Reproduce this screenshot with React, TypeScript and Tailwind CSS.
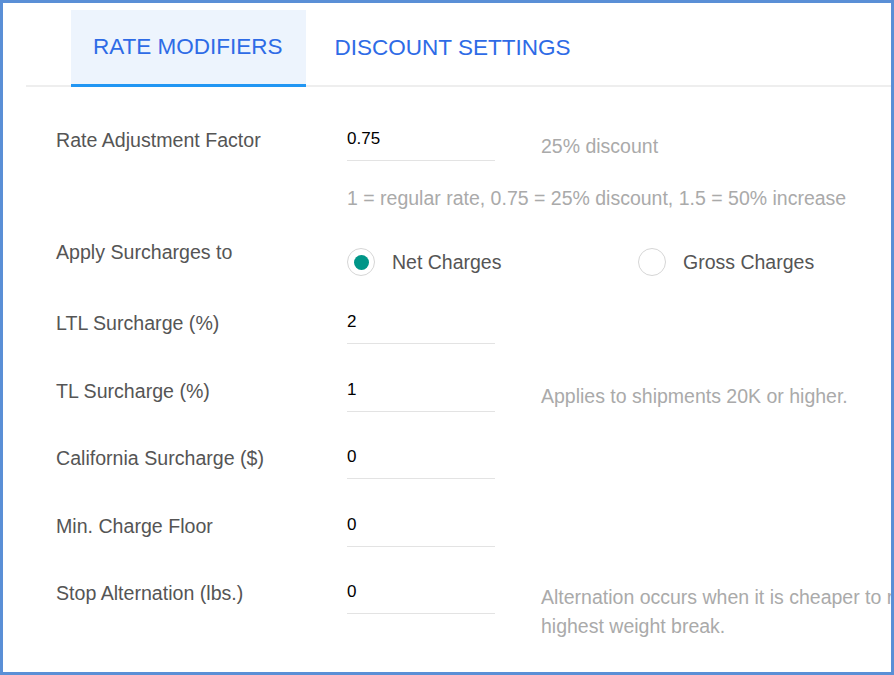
import React from 'react';

const rows = [
  { label: 'LTL Surcharge (%)', value: '2' },
  { label: 'TL Surcharge (%)', value: '1', hint: 'Applies to shipments 20K or higher.' },
  { label: 'California Surcharge ($)', value: '0' },
  { label: 'Min. Charge Floor', value: '0' },
];

function Field({ value }: { value: string }) {
  return (
    <div className="w-[148px] shrink-0 border-b border-[#e3e3e3] pb-[10px] pt-[8px] text-[17px] leading-[22px] text-black">
      {value}
    </div>
  );
}

function Radio({ checked, label }: { checked?: boolean; label: string }) {
  return (
    <div className="flex items-center gap-[17px]">
      <span className="flex h-[28px] w-[28px] items-center justify-center rounded-full border-[1.5px] border-[#d6d6d6]">
        {checked && <span className="h-[15px] w-[15px] rounded-full bg-[#009688]"></span>}
      </span>
      <span className="text-[19.5px] leading-[22px] text-[#555]">{label}</span>
    </div>
  );
}

export default function App() {
  return (
    <div className="h-[675px] w-[894px] overflow-hidden border-[3px] border-[#5a8fd6] bg-white font-['Liberation_Sans',Arial,sans-serif]">
      {/* Tabs */}
      <div className="ml-[23px] mt-[7px] flex items-end border-b-2 border-[#eeeeee]">
        <div className="-mb-[2px] ml-[45px] flex h-[77px] items-center border-b-[3px] border-[#2196f3] bg-[#edf4fd] pl-[22px] pr-[23px] text-[22.5px] text-[#2e6be6]">
          RATE MODIFIERS
        </div>
        <div className="ml-[29px] flex h-[75px] items-center text-[22.5px] text-[#2e6be6]">DISCOUNT SETTINGS</div>
      </div>

      {/* Form */}
      <div className="pl-[53px] pt-[33px]">
        <div className="flex items-start">
          <div className="w-[291px] shrink-0 py-[9px] text-[19.6px] leading-[22px] text-[#555]">Rate Adjustment Factor</div>
          <Field value="0.75" />
          <div className="ml-[46px] pt-[15px] text-[19.5px] leading-[22px] text-[#aaa]">25% discount</div>
        </div>
        <div className="ml-[291px] mt-[26px] whitespace-nowrap text-[19.5px] leading-[22px] text-[#aaa]">
          1 = regular rate, 0.75 = 25% discount, 1.5 = 50% increase
        </div>

        <div className="mt-[32px] flex items-start">
          <div className="w-[291px] shrink-0 text-[19.6px] leading-[22px] text-[#555]">Apply Surcharges to</div>
          <div className="mt-[7px] flex">
            <div className="w-[291px]">
              <Radio checked label="Net Charges" />
            </div>
            <Radio label="Gross Charges" />
          </div>
        </div>

        <div className="mt-[27px] flex flex-col gap-[26.5px]">
          {rows.map((r) => (
            <div key={r.label} className="flex items-start">
              <div className="w-[291px] shrink-0 py-[9px] text-[19.6px] leading-[22px] text-[#555]">{r.label}</div>
              <Field value={r.value} />
              {r.hint && (
                <div className="ml-[46px] pt-[14px] text-[19.5px] leading-[22px] text-[#aaa]">{r.hint}</div>
              )}
            </div>
          ))}
          <div className="flex items-start">
            <div className="w-[291px] shrink-0 py-[9px] text-[19.6px] leading-[22px] text-[#555]">Stop Alternation (lbs.)</div>
            <Field value="0" />
            <div className="ml-[46px] w-[530px] shrink-0 pt-[10px] text-[19.5px] leading-[29px] text-[#aaa]">
              Alternation occurs when it is cheaper to rate at the next highest weight break.
            </div>
          </div>
        </div>
      </div>
    </div>
  );
}
